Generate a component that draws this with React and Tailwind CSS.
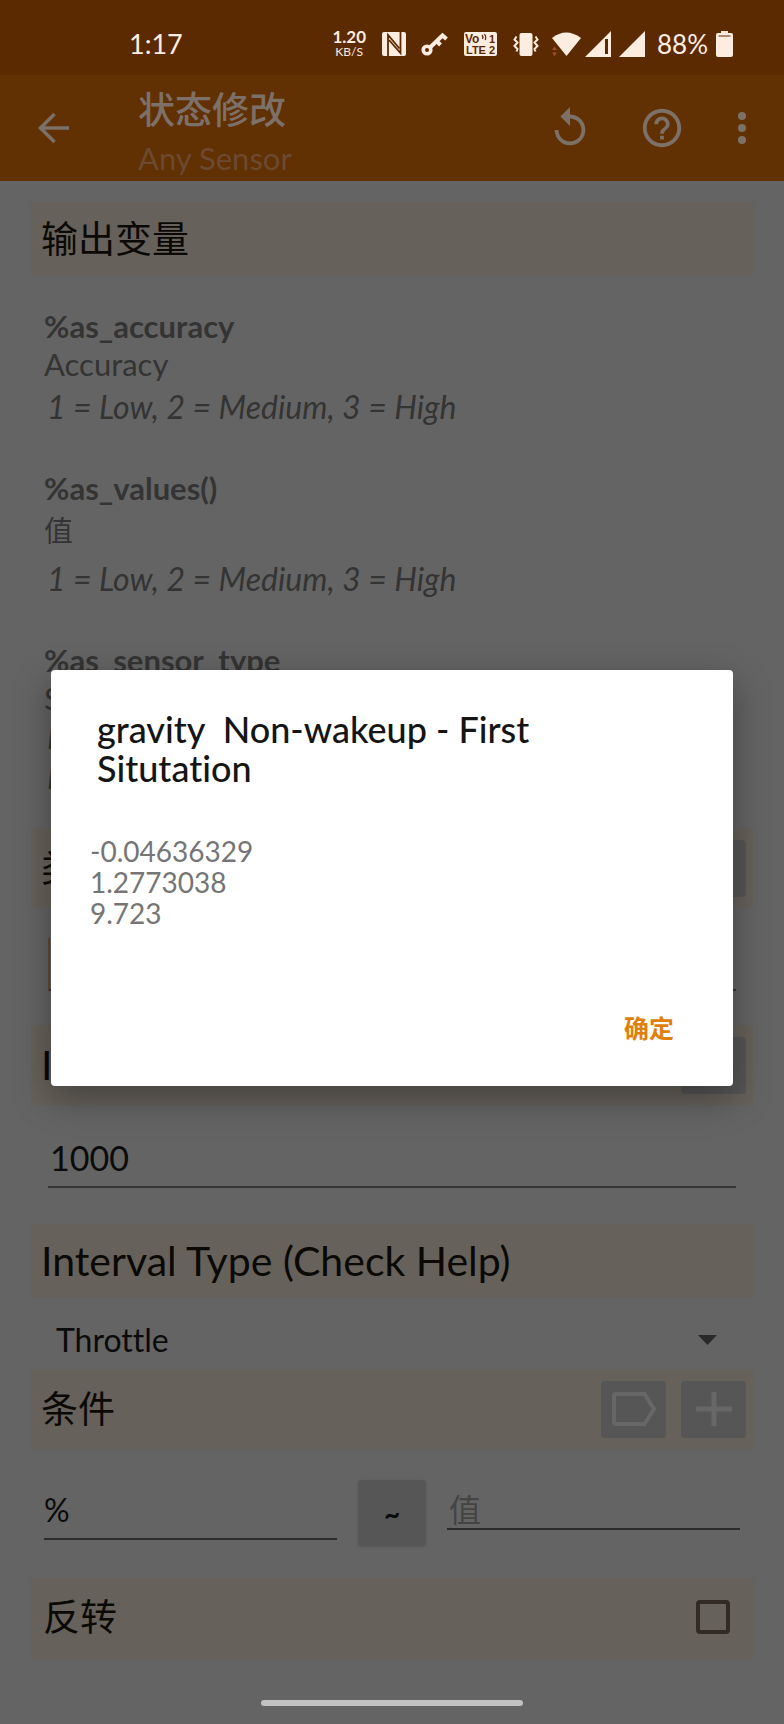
import React from "react";

const outputs = [
  { name: "%as_accuracy", label: "Accuracy", notes: ["1 = Low, 2 = Medium, 3 = High"], labelClass: "leading-[38px]", noteClass: "leading-[48px]" },
  { name: "%as_values()", label: "值", notes: ["1 = Low, 2 = Medium, 3 = High"], labelClass: "text-[29px] leading-[48px]", noteClass: "leading-[48px]" },
  { name: "%as_sensor_type", label: "Sensor", notes: ["Name", "Name"], labelClass: "leading-[38px]", noteClass: "leading-[40px]" },
];

function StatusBar() {
  return (
    <div className="flex h-[75px] items-center bg-[#5c2a00] pr-[51px] pl-[129px] pt-[12px] text-[#fdece0]">
      <span className="text-[27px] leading-8">1:17</span>
      <div className="ml-auto flex flex-col items-center">
        <span className="text-[17px] leading-[17px] font-bold">1.20</span>
        <span className="text-[12px] leading-[14px]">KB/S</span>
      </div>
      <svg className="ml-4 h-6 w-6" viewBox="0 0 24 24" aria-label="NFC">
        <rect width="24" height="24" rx="2" fill="currentColor" />
        <path d="M6 24V3L17.500 16.500" fill="none" stroke="#5c2a00" strokeWidth="1.800" />
        <path d="M18.500 0V21L7 8" fill="none" stroke="#5c2a00" strokeWidth="1.800" />
      </svg>
      <svg className="ml-[15px] h-6 w-[27px]" viewBox="0 0 27 24" aria-label="VPN">
        <circle cx="6" cy="18" r="3.800" fill="none" stroke="currentColor" strokeWidth="3.600" />
        <path d="M9 15.500L22.500 2.500M20.500 2.500l5 4.500M15.500 9l4 4" fill="none" stroke="currentColor" strokeWidth="4" />
      </svg>
      <svg className="ml-4 h-6 w-[33px]" viewBox="0 0 33 24" aria-label="VoLTE">
        <rect width="33" height="24" rx="2" fill="currentColor" />
        <g fill="#5c2a00" className="font-['Liberation_Sans',sans-serif] font-bold">
          <text x="1" y="10.500" fontSize="12">Vo</text>
          <text x="2" y="22" fontSize="11">LTE</text>
          <text x="25" y="10.500" fontSize="11">1</text>
          <text x="25" y="22" fontSize="11">2</text>
        </g>
        <path d="M18 3q1.500 1.500 .5 4M20.500 2q2 2.500 .8 6" fill="none" stroke="#5c2a00" strokeWidth="1.200" />
      </svg>
      <svg className="ml-4 h-6 w-[26px]" viewBox="0 0 26 24" aria-label="Vibrate">
        <rect x="6.500" y="1" width="13" height="23" rx="2" fill="currentColor" />
        <path d="M3.500 4.500L1.500 7.500l3 3-3 3.500 3 3-1 2.500M22.500 4.500l2 3-3 3 3 3.500-3 3 1 2.500" fill="none" stroke="currentColor" strokeWidth="2" />
      </svg>
      <svg className="ml-3 h-6 w-[30px]" viewBox="0 0 30 24" aria-label="Wi-Fi">
        <path d="M15.500 24L1 6Q15 -5 30 6Z" fill="currentColor" />
        <path d="M1 18l2.500-3.500L6 18zM1 20.500h5L3.500 24z" fill="#9b5226" />
      </svg>
      <svg className="ml-1 h-[26px] w-[26px]" viewBox="0 0 26 26" aria-label="Signal 1">
        <path d="M0 26L26 0V26Z" fill="currentColor" />
        <path d="M21.500 8v15" stroke="#5c2a00" strokeWidth="3" />
      </svg>
      <svg className="ml-2 h-[26px] w-[26px]" viewBox="0 0 26 26" aria-label="Signal 2">
        <path d="M0 26L26 0V26Z" fill="currentColor" />
      </svg>
      <span className="ml-3 text-[26px] leading-8">88%</span>
      <svg className="ml-2 h-[26px] w-[17px]" viewBox="0 0 17 26" aria-label="Battery">
        <path d="M5 0h7v2H5z" fill="currentColor" />
        <rect y="2" width="17" height="24" rx="2" fill="currentColor" />
        <path d="M2.500 5h12" stroke="#5c2a00" strokeWidth="1" />
      </svg>
    </div>
  );
}

function AppBar() {
  return (
    <header className="flex h-[106px] items-center bg-[#613003] pr-[32px] pl-[36px] text-[#7c7068]">
      <button type="button" aria-label="Back" className="flex h-9 w-9 items-center justify-center">
        <svg className="h-9 w-9" viewBox="0 0 36 36" fill="none" stroke="currentColor" strokeWidth="3.500">
          <path d="M33 18H5M18.500 4L4.500 18l14 14" />
        </svg>
      </button>
      <div className="ml-[66px] flex flex-col pt-[10px]">
        <h1 className="text-[37px] leading-[50px] font-medium">状态修改</h1>
        <p className="text-[31px] leading-[46px] text-[#6b4a30]">Any Sensor</p>
      </div>
      <button type="button" aria-label="Reset" className="ml-auto">
        <svg className="h-[46px] w-[46px]" viewBox="0 0 24 24" fill="currentColor">
          <path d="M12 5V1L7 6l5 5V7c3.310 0 6 2.690 6 6s-2.690 6-6 6-6-2.690-6-6H4c0 4.420 3.580 8 8 8s8-3.580 8-8-3.580-8-8-8z" />
        </svg>
      </button>
      <button type="button" aria-label="Help" className="ml-[46px]">
        <svg className="h-[46px] w-[46px]" viewBox="0 0 24 24" fill="currentColor">
          <path d="M11 18h2v-2h-2v2zm1-16C6.480 2 2 6.480 2 12s4.480 10 10 10 10-4.480 10-10S17.520 2 12 2zm0 18c-4.410 0-8-3.590-8-8s3.590-8 8-8 8 3.590 8 8-3.590 8-8 8zm0-14c-2.210 0-4 1.790-4 4h2c0-1.100.9-2 2-2s2 .9 2 2c0 2-3 1.750-3 5h2c0-2.250 3-2.500 3-5 0-2.210-1.790-4-4-4z" />
        </svg>
      </button>
      <button type="button" aria-label="More options" className="ml-[47px]">
        <svg className="h-[32px] w-[20px]" viewBox="0 0 20 32" fill="currentColor">
          <circle cx="10" cy="4" r="4" />
          <circle cx="10" cy="16" r="4" />
          <circle cx="10" cy="28" r="4" />
        </svg>
      </button>
    </header>
  );
}

function TagButton() {
  return (
    <button type="button" aria-label="Insert variable" className="flex h-[57px] w-[65px] items-center justify-center rounded-sm bg-[#565656] text-[#676767]">
      <svg className="h-[34px] w-[44px]" viewBox="0 0 44 34" fill="none" stroke="currentColor" strokeWidth="4">
        <path d="M4 2h28.500L42 17l-9.500 15H4a2 2 0 0 1-2-2V4a2 2 0 0 1 2-2z" />
      </svg>
    </button>
  );
}

function AddButton() {
  return (
    <button type="button" aria-label="Add" className="flex h-[57px] w-[65px] items-center justify-center rounded-sm bg-[#565656] text-[#676767]">
      <svg className="h-[34px] w-[36px]" viewBox="0 0 36 34" fill="none" stroke="currentColor" strokeWidth="5">
        <path d="M18 0v34M0 17h36" />
      </svg>
    </button>
  );
}

function Section({ children, cjk, tall, action }) {
  return (
    <div className={`flex items-center justify-between bg-[#66615a] pr-[7px] pl-[10px] text-[#0b0905] ${tall ? "h-[80px]" : "h-[74px]"}`}>
      <h2 className={cjk ? "text-[37px]" : "text-[41px]"}>{children}</h2>
      {action}
    </div>
  );
}

export default function App() {
  return (
    <div className="relative flex min-h-screen flex-col bg-[#646464] font-['Lato','Noto_Sans_CJK_SC',sans-serif] [font-variant-ligatures:none]">
      <StatusBar />
      <AppBar />
      <main className="flex flex-col px-[31px] pt-[21px]">
        <Section cjk>输出变量</Section>
        <dl className="mt-[31px] mb-[31px] flex flex-col gap-[38px] pl-[13px] text-[31px] text-[#343434]">
          {outputs.map((o) => (
            <div key={o.name}>
              <dt className="leading-[38px] font-bold">{o.name}</dt>
              <dd className={o.labelClass}>{o.label}</dd>
              {o.notes.map((n, i) => (
                <dd key={i} className={`pl-[3px] text-[32px] italic ${o.noteClass}`}>{n}</dd>
              ))}
            </div>
          ))}
        </dl>

        <Section cjk tall action={<AddButton />}>类型</Section>
        <input aria-label="类型" defaultValue="" className="mx-[17px] mt-[30px] mb-[34px] h-[53px] border-b-2 border-l-2 border-[#343434] border-l-[#5f4a30] bg-transparent text-[34px] outline-none" />

        <Section tall action={<AddButton />}>Interval</Section>
        <input aria-label="Interval" defaultValue="1000" className="mx-[17px] mb-[36px] h-[83px] border-b-2 border-[#343434] bg-transparent px-[2px] pt-6 text-[34px] text-[#0b0b0b] outline-none" />

        <Section>Interval Type (Check Help)</Section>
        <div className="grid h-[71px] items-center pt-3">
          <select aria-label="Interval Type (Check Help)" className="col-start-1 row-start-1 w-full appearance-none bg-transparent pl-[25px] text-[32px] text-[#0b0b0b] outline-none">
            <option>Throttle</option>
          </select>
          <svg className="pointer-events-none col-start-1 row-start-1 mr-[36px] h-[10px] w-[19px] justify-self-end" viewBox="0 0 19 10" fill="#2a2a2a">
            <path d="M0 0h19L9.500 10z" />
          </svg>
        </div>

        <Section cjk tall action={<div className="flex gap-[15px]"><TagButton /><AddButton /></div>}>条件</Section>
        <div className="grid h-[129px] grid-cols-[minmax(0,1fr)_auto_minmax(0,1fr)] items-start gap-[21px] px-[13px] pt-[31px] text-[#0b0b0b]">
          <input aria-label="变量" defaultValue="%" className="h-[60px] w-full border-b-2 border-[#2c2c2c] bg-transparent text-[32px] outline-none" />
          <button type="button" className="h-[66px] w-[68px] rounded bg-[#565656] text-[28px] font-bold shadow-sm">~</button>
          <input aria-label="值" placeholder="值" className="h-[50px] w-full border-b-2 border-[#2c2c2c] bg-transparent px-[2px] pt-[10px] text-[32px] outline-none placeholder:text-[#444444]" />
        </div>

        <label className="flex h-[82px] items-center justify-between bg-[#66615a] pr-[23px] pb-1 pl-[12px] text-[37px] text-[#0b0905]">
          反转
          <input type="checkbox" className="h-[34px] w-[34px] appearance-none rounded-sm border-4 border-[#312a25]" />
        </label>
      </main>
      <div className="mt-auto mb-[18px] h-[6px] w-1/3 self-center rounded-full bg-[#c1c1c1]" />

      <div className="absolute inset-0 flex items-center px-[51px] pt-8">
        <div role="dialog" aria-modal="true" aria-labelledby="dialog-title" className="flex w-full flex-col rounded bg-white pt-10 pr-[39px] pb-[29px] pl-[39px] shadow-[0_12px_36px_rgba(0,0,0,0.35)]">
          <h2 id="dialog-title" className="max-w-[500px] pl-[7px] text-[36px] leading-[39px] font-medium whitespace-pre-wrap text-[#151515]">gravity  Non-wakeup - First Situtation</h2>
          <p className="mt-[48px] text-[28px] leading-[31px] text-[#757575]">
            -0.04636329
            <br />
            1.2773038
            <br />
            9.723
          </p>
          <button type="button" className="mt-[72px] flex h-[56px] items-center self-end px-5 text-[25px] font-bold text-[#e0800c]">确定</button>
        </div>
      </div>
    </div>
  );
}
